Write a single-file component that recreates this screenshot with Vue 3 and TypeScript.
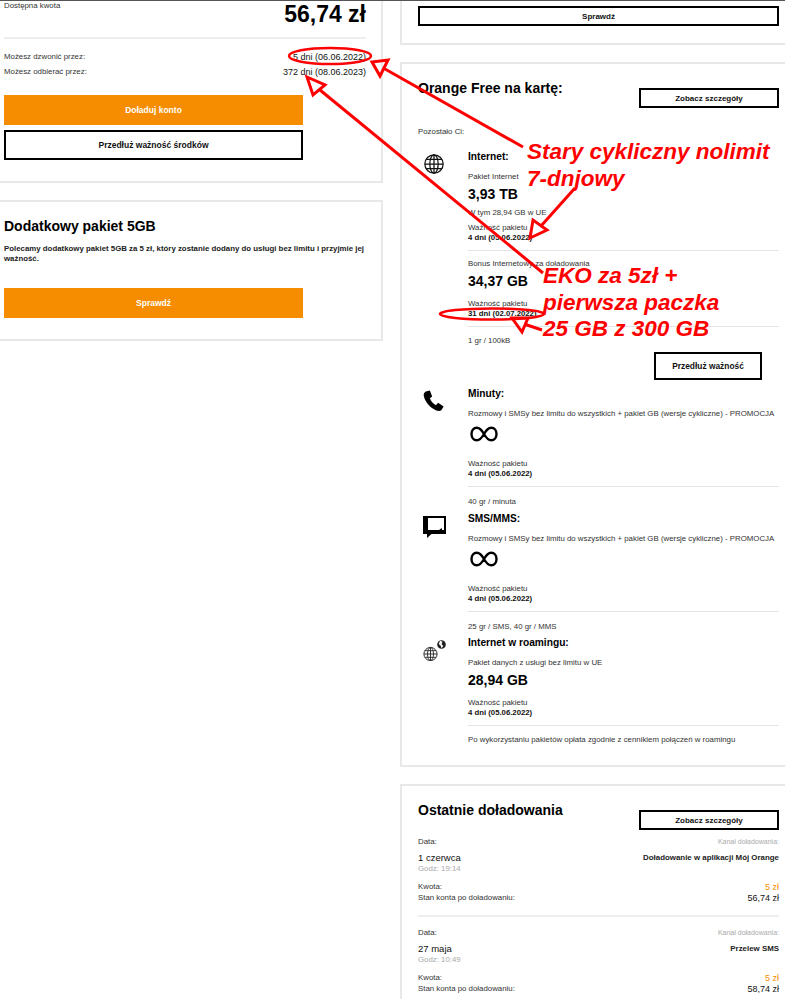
<script setup lang="ts">
// Konto na karte: saldo po lewej, pakiety i doladowania po prawej, na wierzchu czerwone adnotacje.
interface TopUp {
  date: string
  time: string
  channel: string
  amount: string
  balance: string
}

const topUps: TopUp[] = [
  { date: '1 czerwca', time: 'Godz: 19:14', channel: 'Doładowanie w aplikacji Mój Orange', amount: '5 zł', balance: '56,74 zł' },
  { date: '27 maja', time: 'Godz: 10:49', channel: 'Przelew SMS', amount: '5 zł', balance: '58,74 zł' }
]

const promo = 'Rozmowy i SMSy bez limitu do wszystkich + pakiet GB (wersje cykliczne) - PROMOCJA'
const cyclicValidity = '4 dni (05.06.2022)'
const infinityPath = 'M14 8C11.5 3.5 9.5 1.8 6.8 1.8 3.6 1.8 1.5 4.5 1.5 8s2.1 6.2 5.300 6.2c2.7 0 4.7-1.7 7.2-6.2s4.5-6.2 7.2-6.2c3.2 0 5.3 2.7 5.3 6.2s-2.100 6.2-5.300 6.2c-2.7 0-4.7-1.7-7.2-6.2Z'
</script>

<template>
  <div class="page">
    <div class="columns">
      <div class="col-left">
        <section class="card card-balance">
          <div class="balance-row">
            <span class="txt">Dostępna kwota</span>
            <span class="balance">56,74 zł</span>
          </div>
          <hr class="rule rule-thick">
          <div class="term-row term-first">
            <span class="txt">Możesz dzwonić przez:</span>
            <span class="term">5 dni (06.06.2022)</span>
          </div>
          <div class="term-row term-second">
            <span class="txt">Możesz odbierać przez:</span>
            <span class="term">372 dni (08.06.2023)</span>
          </div>
          <button class="btn btn-orange top-up">Doładuj konto</button>
          <button class="btn btn-outline extend">Przedłuż ważność środków</button>
        </section>

        <section class="card card-extra">
          <h2 class="extra-title">Dodatkowy pakiet 5GB</h2>
          <p class="extra-text">Polecamy dodatkowy pakiet 5GB za 5 zł, który zostanie dodany do usługi bez limitu i przyjmie jej ważność.</p>
          <button class="btn btn-orange check">Sprawdź</button>
        </section>
      </div>

      <div class="col-right">
        <section class="panel panel-check">
          <button class="btn btn-outline check-top">Sprawdź</button>
        </section>

        <section class="panel panel-plan">
          <div class="panel-head">
            <h2 class="plan-title">Orange Free na kartę:</h2>
            <button class="btn btn-outline details">Zobacz szczegóły</button>
          </div>
          <p class="txt left-label">Pozostało Ci:</p>

          <div class="pack pack-internet">
            <svg class="icon icon-globe" viewBox="0 0 24 24" aria-hidden="true">
              <g fill="none" stroke="#111" stroke-width="1.5">
                <circle cx="12" cy="12" r="11" />
                <ellipse cx="12" cy="12" rx="5" ry="11" />
                <path d="M12 1v22M1 12h22M2.800 6.500h18.400M2.800 17.500h18.400" />
              </g>
            </svg>
            <div class="pack-body">
              <h3 class="pack-title">Internet:</h3>
              <p class="txt pack-name">Pakiet Internet</p>
              <p class="amount">3,93 TB</p>
              <p class="txt under-amount">W tym 28,94 GB w UE</p>
              <p class="txt validity validity-tight">Ważność pakietu</p>
              <p class="txt-strong">{{ cyclicValidity }}</p>
              <hr class="rule">
              <p class="txt after-rule-tight">Bonus Internetowy za doładowania</p>
              <p class="amount">34,37 GB</p>
              <p class="txt validity">Ważność pakietu</p>
              <p class="txt-strong">31 dni (02.07.2022)</p>
              <hr class="rule">
              <p class="txt after-rule-mid">1 gr / 100kB</p>
              <button class="btn btn-outline extend-pack">Przedłuż ważność</button>
            </div>
          </div>

          <div class="pack pack-minutes">
            <svg class="icon icon-phone" viewBox="0 0 24 24" aria-hidden="true">
              <path fill="#000" d="M3 1.500 7.500.5 10 7 7.500 9c1 3 3.500 6 6.500 7.500l2.500-2.500 6 4L20 22c-2 1.500-5 1-8-1C6 17.500 1.500 11 .8 6 .6 4 1.500 2.500 3 1.500Z" />
            </svg>
            <div class="pack-body">
              <h3 class="pack-title">Minuty:</h3>
              <p class="txt pack-desc">{{ promo }}</p>
              <svg class="infinity" viewBox="0 0 28 16" aria-hidden="true">
                <path fill="none" stroke="#000" stroke-width="2.400" :d="infinityPath" />
              </svg>
              <p class="txt validity validity-far">Ważność pakietu</p>
              <p class="txt-strong">{{ cyclicValidity }}</p>
              <hr class="rule">
              <p class="txt after-rule">40 gr / minuta</p>
            </div>
          </div>

          <div class="pack pack-sms">
            <svg class="icon icon-sms" viewBox="0 0 23 22" aria-hidden="true">
              <path fill="#000" fill-rule="evenodd" d="M0 0h23v18H8.500L4 22v-4H0ZM5 2v12h16V2Z" />
              <path fill="#000" d="M16 14l3-2v2Z" />
            </svg>
            <div class="pack-body">
              <h3 class="pack-title">SMS/MMS:</h3>
              <p class="txt pack-desc">{{ promo }}</p>
              <svg class="infinity" viewBox="0 0 28 16" aria-hidden="true">
                <path fill="none" stroke="#000" stroke-width="2.400" :d="infinityPath" />
              </svg>
              <p class="txt validity validity-far">Ważność pakietu</p>
              <p class="txt-strong">{{ cyclicValidity }}</p>
              <hr class="rule">
              <p class="txt after-rule">25 gr / SMS, 40 gr / MMS</p>
            </div>
          </div>

          <div class="pack pack-roaming">
            <svg class="icon icon-roaming" viewBox="0 0 23 21" aria-hidden="true">
              <g fill="none" stroke="#333" stroke-width="1">
                <circle cx="7.500" cy="14" r="6.600" />
                <ellipse cx="7.500" cy="14" rx="3" ry="6.600" />
                <path d="M7.500 7.400v13.200M.9 14h13.200M1.900 10.700h11.200M1.900 17.300h11.200" />
              </g>
              <circle cx="18.500" cy="4.500" r="4.300" fill="#222" />
              <path fill="#fff" d="M17 .8l2.500 1-1 2.200 1.700 2-1.500 2.200-1.200-2.700-1.700-1.500Z" />
            </svg>
            <div class="pack-body">
              <h3 class="pack-title">Internet w roamingu:</h3>
              <p class="txt pack-name">Pakiet danych z usługi bez limitu w UE</p>
              <p class="amount">28,94 GB</p>
              <p class="txt validity">Ważność pakietu</p>
              <p class="txt-strong">{{ cyclicValidity }}</p>
              <hr class="rule">
              <p class="txt after-rule-mid">Po wykorzystaniu pakietów opłata zgodnie z cennikiem połączeń w roamingu</p>
            </div>
          </div>
        </section>

        <section class="panel panel-topups">
          <div class="panel-head">
            <h2 class="topups-title">Ostatnie doładowania</h2>
            <button class="btn btn-outline details">Zobacz szczegóły</button>
          </div>
          <article v-for="item in topUps" :key="item.date" class="topup">
            <div class="topup-head">
              <div>
                <p class="txt">Data:</p>
                <p class="topup-date">{{ item.date }}</p>
                <p class="txt muted">{{ item.time }}</p>
              </div>
              <div class="topup-channel">
                <p class="txt muted channel-label">Kanał doładowania:</p>
                <p class="channel-name">{{ item.channel }}</p>
              </div>
            </div>
            <div class="money-row money-first">
              <span class="txt">Kwota:</span>
              <span class="money money-orange">{{ item.amount }}</span>
            </div>
            <div class="money-row">
              <span class="txt">Stan konta po doładowaniu:</span>
              <span class="money">{{ item.balance }}</span>
            </div>
          </article>
        </section>
      </div>
    </div>

    <!-- adnotacje naniesione na zrzut -->
    <svg class="marks" viewBox="0 0 785 999" aria-hidden="true">
      <g fill="none" stroke="#f00">
        <ellipse cx="330" cy="56" rx="41" ry="8" stroke-width="2.500" />
        <ellipse cx="492" cy="314" rx="52" ry="5.500" stroke-width="2.500" />
        <g stroke-width="3">
          <path d="M523 147 385 69M372 62l16-2-8 16Z" />
          <path d="M543 273 320 90M307 77l18 8-12 10Z" />
          <path d="M575 188 541 226M530 238l17-8-14-10Z" />
          <path d="M542 330 524 324M512 318h16l-6 14Z" />
        </g>
      </g>
    </svg>
    <p class="note note-old">Stary cykliczny nolimit<br>7-dnjowy</p>
    <p class="note note-eko">EKO za 5zł +<br>pierwsza paczka<br>25 GB z 300 GB</p>
  </div>
</template>

<style scoped>
.page {
  position: relative;
  width: 785px;
  height: 999px;
  overflow: hidden;
  border-top: 1px solid #555;
  box-sizing: border-box;
  background: #fff;
  color: #000;
  font-family: "Liberation Sans", Arial, sans-serif;
}
p, h2, h3 {
  margin: 0;
}
.columns {
  display: flex;
  gap: 17px;
  align-items: flex-start;
}
.col-left {
  width: 383px;
  flex: none;
}
.col-right {
  width: 385px;
  flex: none;
}
.txt {
  font-size: 7.850px;
  line-height: 10px;
  color: #333;
}
.txt-strong {
  font-size: 7.750px;
  line-height: 10px;
  font-weight: 700;
  color: #111;
}
.muted {
  color: #aaa;
}
.rule {
  height: 1px;
  margin: 7px 0 0;
  border: 0;
  background: #e4e4e4;
}
.rule-thick {
  width: 362px;
  height: 2px;
  margin-top: 10px;
  background: #eee;
}
.btn {
  display: block;
  box-sizing: border-box;
  padding: 0;
  font-family: inherit;
  font-weight: 700;
  font-size: 8px;
  cursor: pointer;
}
.btn-orange {
  width: 299px;
  height: 30px;
  border: 0;
  background: #f68d00;
  color: #fff;
  font-size: 8.500px;
}
.btn-outline {
  border: 2px solid #000;
  background: #fff;
  color: #111;
}

/* lewa kolumna */
.card {
  box-sizing: border-box;
  padding-left: 4px;
  border-right: 2px solid #e8e8e8;
  border-bottom: 2px solid #e8e8e8;
}
.card-balance {
  height: 182px;
}
.balance-row {
  display: flex;
  justify-content: space-between;
  width: 362px;
  height: 26px;
}
.balance {
  font-size: 23px;
  line-height: 26px;
  font-weight: 700;
}
.term-row {
  display: flex;
  justify-content: space-between;
  width: 362px;
  line-height: 10px;
}
.term-first {
  margin-top: 13px;
}
.term-second {
  margin-top: 5px;
}
.term {
  font-size: 9px;
  color: #111;
}
.top-up {
  margin-top: 18px;
}
.extend {
  width: 299px;
  height: 30px;
  margin-top: 5px;
  font-size: 8.500px;
}
.card-extra {
  height: 141px;
  margin-top: 17px;
  border-top: 2px solid #e8e8e8;
}
.extra-title {
  margin-top: 15px;
  font-size: 14px;
  line-height: 18px;
  font-weight: 700;
}
.extra-text {
  width: 362px;
  margin-top: 9px;
  font-size: 7.850px;
  line-height: 10px;
  font-weight: 700;
  color: #222;
}
.check {
  margin-top: 24px;
}

/* prawa kolumna */
.panel {
  box-sizing: border-box;
  padding: 0 6px 0 16px;
  border-left: 2px solid #e8e8e8;
  border-bottom: 2px solid #e8e8e8;
}
.panel-check {
  height: 44px;
  padding-top: 5px;
}
.check-top {
  width: 100%;
  height: 20px;
}
.panel-plan,
.panel-topups {
  margin-top: 17px;
  border-top: 2px solid #e8e8e8;
}
.panel-plan {
  height: 705px;
  padding-top: 16px;
}
.panel-head {
  display: flex;
  justify-content: space-between;
  align-items: flex-start;
}
.plan-title {
  font-size: 14px;
  line-height: 16px;
}
.details {
  width: 140px;
  height: 20px;
  margin-top: 8px;
}
.left-label {
  margin-top: 19px;
}
.pack {
  display: flex;
}
.pack-internet {
  margin-top: 14px;
}
.icon {
  flex: none;
}
.icon-globe {
  width: 20px;
  height: 20px;
  margin: 3px 24px 0 6px;
}
.icon-phone {
  width: 22px;
  height: 22px;
  margin: 2px 23px 0 5px;
}
.icon-sms {
  width: 23px;
  height: 22px;
  margin: 3px 22px 0 5px;
}
.icon-roaming {
  width: 23px;
  height: 21px;
  margin: 3px 22px 0 5px;
}
.pack-body {
  flex: 1;
  min-width: 0;
}
.pack-title {
  font-size: 10.200px;
  line-height: 12px;
  font-weight: 700;
}
.pack-name {
  margin-top: 9px;
}
.pack-desc {
  margin-top: 9px;
  white-space: nowrap;
}
.amount {
  margin-top: 3px;
  font-size: 14px;
  line-height: 18px;
  font-weight: 700;
}
.under-amount {
  margin-top: 5px;
}
.validity {
  margin-top: 9px;
}
.validity-tight {
  margin-top: 5px;
}
.validity-far {
  margin-top: 17px;
}
.after-rule {
  margin-top: 10px;
}
.after-rule-mid {
  margin-top: 9px;
}
.after-rule-tight {
  margin-top: 8px;
}
.extend-pack {
  width: 108px;
  height: 28px;
  margin: 6px 17px 0 auto;
  font-size: 8.400px;
}
.pack-minutes {
  margin-top: 8px;
}
.pack-sms {
  margin-top: 6px;
}
.pack-roaming {
  margin-top: 5px;
}
.infinity {
  display: block;
  width: 28px;
  height: 16px;
  margin: 7px 0 0 2px;
}
.panel-topups {
  height: 300px;
  padding-top: 16px;
}
.topups-title {
  font-size: 14px;
  line-height: 16px;
  font-weight: 700;
}
.topup {
  margin-top: 7px;
  padding-bottom: 11px;
  border-bottom: 2px solid #eee;
}
.topup + .topup {
  margin-top: 11px;
  border-bottom: 0;
}
.topup-head {
  display: flex;
  justify-content: space-between;
}
.topup-channel {
  text-align: right;
}
.channel-label {
  font-size: 7px;
}
.topup-date {
  margin-top: 5px;
  font-size: 9.500px;
  line-height: 12px;
  color: #111;
}
.channel-name {
  margin-top: 5px;
  font-size: 7.900px;
  line-height: 12px;
  font-weight: 700;
  color: #222;
}
.money-row {
  display: flex;
  justify-content: space-between;
  line-height: 11px;
}
.money-first {
  margin-top: 8px;
}
.money {
  font-size: 9px;
  color: #111;
}
.money-orange {
  color: #f68d00;
}

/* adnotacje */
.marks {
  position: absolute;
  left: 0;
  top: -1px;
  width: 785px;
  height: 999px;
  pointer-events: none;
}
.note {
  position: absolute;
  margin: 0;
  font-size: 22.500px;
  line-height: 26.500px;
  font-style: italic;
  font-weight: 700;
  color: #f00;
  white-space: nowrap;
}
.note-old {
  left: 527px;
  top: 138px;
}
.note-eko {
  left: 543px;
  top: 262px;
}
</style>

<style>
html, body {
  overflow: hidden;
}
</style>
